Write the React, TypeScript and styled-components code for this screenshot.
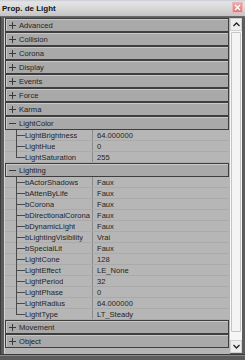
import React from "react";
import styled, { createGlobalStyle } from "styled-components";

const Global = createGlobalStyle`
  html, body { margin: 0; padding: 0; background: #4a4a4a; }
  body { font-family: "Liberation Sans", Arial, sans-serif; }
`;

const Window = styled.div`
  width: 245px;
  height: 360px;
  display: flex;
  flex-direction: column;
  background: #5c5c5c;
  box-sizing: border-box;
  overflow: hidden;
`;

const TitleBar = styled.div`
  height: 17px;
  flex: none;
  display: flex;
  align-items: center;
  justify-content: space-between;
  padding: 0 2px 0 2px;
  box-sizing: border-box;
  background: linear-gradient(#c9ccd4 0px, #e4e4e4 2px, #d6d6d6 9px, #c4c4c4 16px);
  border-bottom: 1px solid #6a6a6a;
`;

const Title = styled.span`
  font-weight: bold;
  font-size: 8px;
  color: #141414;
`;

const CloseButton = styled.div`
  width: 11px;
  height: 11px;
  background: linear-gradient(#f0a8a8, #e07878);
  border: 1px solid #e8b8b8;
  box-sizing: border-box;
  display: flex;
  align-items: center;
  justify-content: center;
  margin-top: -1px;
`;

const Body = styled.div`
  flex: 1;
  display: flex;
  padding: 1px 3px 0 3px;
  min-height: 0;
  border-left: 1px solid #3a3a3a;
`;

const List = styled.div`
  flex: 1;
  display: flex;
  flex-direction: column;
  background: #b4b4b4;
  border-left: 1px solid #d4d4d4;
  padding-bottom: 3px;
`;

const CategoryRow = styled.div`
  height: 14px;
  flex: none;
  display: flex;
  align-items: center;
  box-sizing: border-box;
  background: #a9a9a9;
  border: 1px solid #3e3e3e;
  box-shadow: inset 1px 1px 0 #c8c8c8;
  margin-right: 1px;
`;

const Expander = styled.div`
  width: 12px;
  height: 100%;
  flex: none;
  display: flex;
  align-items: center;
  justify-content: center;
`;

const CatLabel = styled.span`
  font-size: 7.6px;
  color: #242424;
  padding-left: 1px;
`;

const PropRow = styled.div`
  height: 11px;
  flex: none;
  display: flex;
  background: #b6b6b6;
  box-sizing: border-box;
  border-bottom: 1px solid #aaaaaa;
  margin-right: 1px;
`;

const NameCell = styled.div`
  width: 88px;
  flex: none;
  display: flex;
  align-items: stretch;
  border-right: 1px solid #8a8a8a;
  box-sizing: border-box;
`;

const Gutter = styled.div`
  width: 11px;
  flex: none;
`;

const Connector = styled.div`
  width: 9px;
  flex: none;
  display: flex;
  flex-direction: column;
  margin-bottom: -1px;
`;

const ConnTop = styled.div`
  flex: 1;
  border-left: 1px solid #4a4a4a;
  border-bottom: 1px solid #4a4a4a;
`;

const ConnBottom = styled.div<{ $last: boolean }>`
  flex: 1;
  border-left: 1px solid ${(p) => (p.$last ? "transparent" : "#4a4a4a")};
`;

const PropName = styled.span`
  font-size: 7.6px;
  color: #242424;
  line-height: 11px;
  white-space: nowrap;
  overflow: hidden;
`;

const PropValue = styled.span`
  font-size: 7.6px;
  color: #242424;
  line-height: 11px;
  padding-left: 4px;
  white-space: nowrap;
`;

const ScrollBar = styled.div`
  width: 12px;
  flex: none;
  display: flex;
  flex-direction: column;
  background: #f2f2f2;
  margin-bottom: 1px;
`;

const ScrollButton = styled.div`
  height: 13px;
  flex: none;
  display: flex;
  align-items: center;
  justify-content: center;
  background: #eeeeee;
  border: 1px solid #d0d0d0;
  box-sizing: border-box;
`;

const Track = styled.div`
  flex: 1;
  display: flex;
  padding: 1px 1px 8px 1px;
  background: #f6f6f6;
`;

const Thumb = styled.div`
  flex: 1;
  background: #f4f4f4;
  border: 1px solid #c4c4c4;
  border-radius: 1px;
`;

const BottomFrame = styled.div`
  height: 5px;
  flex: none;
  background: #5c5c5c;
  border-top: 1px solid #3a3a3a;
  box-shadow: inset 0 1px 0 #8a8a8a;
`;

const Plus = ({ open }: { open: boolean }) => (
  <svg width="7" height="7" viewBox="0 0 7 7">
    <line x1="0" y1="3.5" x2="7" y2="3.5" stroke="#3a3a3a" strokeWidth="1" />
    {!open && <line x1="3.5" y1="0" x2="3.5" y2="7" stroke="#3a3a3a" strokeWidth="1" />}
  </svg>
);

type Prop = [string, string];
type Cat = { name: string; props?: Prop[] };

const data: Cat[] = [
  { name: "Advanced" },
  { name: "Collision" },
  { name: "Corona" },
  { name: "Display" },
  { name: "Events" },
  { name: "Force" },
  { name: "Karma" },
  {
    name: "LightColor",
    props: [
      ["LightBrightness", "64.000000"],
      ["LightHue", "0"],
      ["LightSaturation", "255"],
    ],
  },
  {
    name: "Lighting",
    props: [
      ["bActorShadows", "Faux"],
      ["bAttenByLife", "Faux"],
      ["bCorona", "Faux"],
      ["bDirectionalCorona", "Faux"],
      ["bDynamicLight", "Faux"],
      ["bLightingVisibility", "Vrai"],
      ["bSpecialLit", "Faux"],
      ["LightCone", "128"],
      ["LightEffect", "LE_None"],
      ["LightPeriod", "32"],
      ["LightPhase", "0"],
      ["LightRadius", "64.000000"],
      ["LightType", "LT_Steady"],
    ],
  },
  { name: "Movement" },
  { name: "Object" },
];

export default function App() {
  return (
    <>
      <Global />
      <Window>
        <TitleBar>
          <Title>Prop. de Light</Title>
          <CloseButton>
            <svg width="7" height="7" viewBox="0 0 7 7">
              <path d="M1 1L6 6M6 1L1 6" stroke="#fff" strokeWidth="1.4" />
            </svg>
          </CloseButton>
        </TitleBar>
        <Body>
          <List>
            {data.map((c) => (
              <React.Fragment key={c.name}>
                <CategoryRow>
                  <Expander>
                    <Plus open={!!c.props} />
                  </Expander>
                  <CatLabel>{c.name}</CatLabel>
                </CategoryRow>
                {c.props?.map(([n, v], i) => (
                  <PropRow key={n}>
                    <NameCell>
                      <Gutter />
                      <Connector>
                        <ConnTop />
                        <ConnBottom $last={i === c.props!.length - 1} />
                      </Connector>
                      <PropName>{n}</PropName>
                    </NameCell>
                    <PropValue>{v}</PropValue>
                  </PropRow>
                ))}
              </React.Fragment>
            ))}
          </List>
          <ScrollBar>
            <ScrollButton>
              <svg width="7" height="5" viewBox="0 0 7 5">
                <path d="M0.5 4L3.5 1L6.5 4" stroke="#222" strokeWidth="1.3" fill="none" />
              </svg>
            </ScrollButton>
            <Track>
              <Thumb />
            </Track>
            <ScrollButton>
              <svg width="7" height="5" viewBox="0 0 7 5">
                <path d="M0.5 1L3.5 4L6.5 1" stroke="#222" strokeWidth="1.3" fill="none" />
              </svg>
            </ScrollButton>
          </ScrollBar>
        </Body>
        <BottomFrame />
      </Window>
    </>
  );
}
